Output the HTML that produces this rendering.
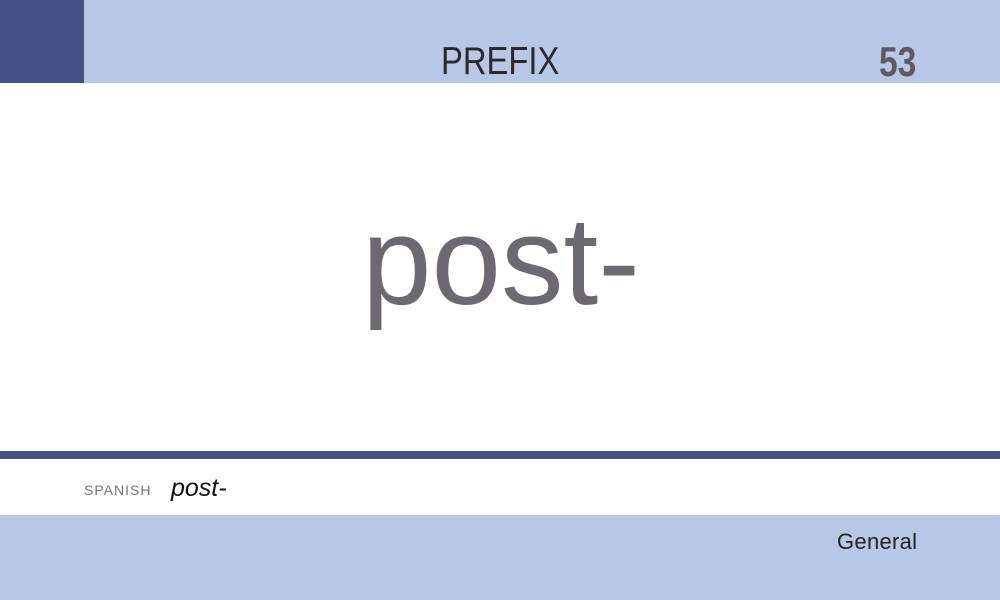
<!DOCTYPE html>
<html><head><style>
body{margin:0;width:1000px;height:600px;position:relative;background:#fff;font-family:"Liberation Sans",sans-serif;overflow:hidden}
.a{position:absolute}
.t{white-space:nowrap;transform-origin:left top}
</style></head><body>
<div class="a" style="left:0;top:0;width:1000px;height:83px;background:#b8c7e6"></div>
<div class="a" style="left:0;top:0;width:84px;height:83px;background:#465284"></div>
<div class="a t" style="left:441px;top:40px;font-size:39px;line-height:44px;color:#2a2a2e;transform:scaleX(0.84)">PREFIX</div>
<div class="a t" style="left:879px;top:40px;font-size:42px;line-height:44px;font-weight:bold;color:#5e5a62;transform:scaleX(0.8)">53</div>
<div class="a t" style="left:362px;top:199px;font-size:125px;line-height:125px;color:#6e6870">post-</div>
<div class="a" style="left:0;top:451px;width:1000px;height:8px;background:#465284"></div>
<div class="a t" style="left:84px;top:482px;font-size:14px;line-height:16px;letter-spacing:1px;color:#777">SPANISH</div>
<div class="a t" style="left:171px;top:473px;font-size:25px;line-height:30px;font-style:italic;color:#111">post-</div>
<div class="a" style="left:0;top:515px;width:1000px;height:85px;background:#b8c7e6"></div>
<div class="a t" style="left:837px;top:529px;font-size:22px;line-height:26px;color:#222;letter-spacing:0.3px">General</div>
</body></html>
